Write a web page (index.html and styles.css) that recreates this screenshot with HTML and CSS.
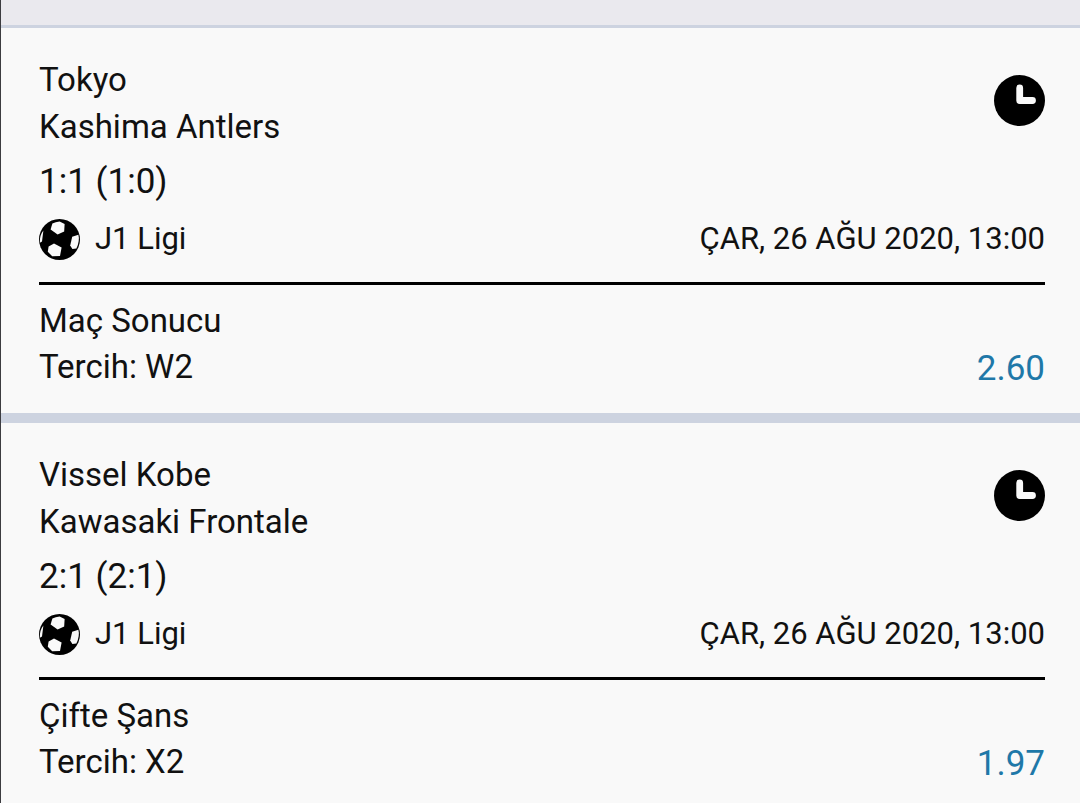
FILE: index.html
```
<!DOCTYPE html>
<html lang="tr">
<head>
    <meta charset="UTF-8">
    <meta name="viewport" content="width=device-width, initial-scale=1.0">
    <title>Kupon</title>
    <link rel="stylesheet" href="styles.css">
</head>
<body>
    <svg class="symbols" aria-hidden="true">
        <symbol id="clock" viewBox="0 0 51 51">
            <circle cx="25.5" cy="25.5" r="25.5"/>
            <path d="M25.7 13V25.5H38.5" fill="none" stroke="#f9f9f9" stroke-width="6.8" stroke-linecap="round" stroke-linejoin="round"/>
        </symbol>
        <symbol id="ball" viewBox="0 0 41 41">
            <circle cx="20.5" cy="20.5" r="20.5"/>
            <g fill="#f9f9f9">
                <path d="M13.4 4.6Q16.5 2.6 20.6 2.4L25.6 5L25.2 12.4L18.6 15.4L11.6 10.6Z"/>
                <path d="M33.2 17.8L39.4 15.8Q41 22 37.4 29.6L33.4 30L31.2 26.6Z"/>
                <path d="M15 24.6L22.6 28.6L21 37L13.2 37.2L8.8 32.8L9.6 27.4Z"/>
                <path d="M4.4 11.4Q0.2 16.5 0.9 23.8L3 22.4Z"/>
            </g>
        </symbol>
    </svg>

    <header class="topbar"></header>

    <main class="coupon">
        <article class="match">
            <div class="match-head">
                <div class="teams">
                    <div>Tokyo</div>
                    <div>Kashima Antlers</div>
                </div>
                <svg class="clock" role="img" aria-label="Beklemede"><use href="#clock"/></svg>
            </div>
            <div class="score">1:1 (1:0)</div>
            <div class="info">
                <svg class="ball" aria-hidden="true"><use href="#ball"/></svg>
                <span class="league">J1 Ligi</span>
                <time class="date" datetime="2020-08-26T13:00">ÇAR, 26 AĞU 2020, 13:00</time>
            </div>
            <div class="bet">
                <div>
                    <div>Maç Sonucu</div>
                    <div>Tercih: W2</div>
                </div>
                <div class="odds">2.60</div>
            </div>
        </article>

        <article class="match">
            <div class="match-head">
                <div class="teams">
                    <div>Vissel Kobe</div>
                    <div>Kawasaki Frontale</div>
                </div>
                <svg class="clock" role="img" aria-label="Beklemede"><use href="#clock"/></svg>
            </div>
            <div class="score">2:1 (2:1)</div>
            <div class="info">
                <svg class="ball" aria-hidden="true"><use href="#ball"/></svg>
                <span class="league">J1 Ligi</span>
                <time class="date" datetime="2020-08-26T13:00">ÇAR, 26 AĞU 2020, 13:00</time>
            </div>
            <div class="bet">
                <div>
                    <div>Çifte Şans</div>
                    <div>Tercih: X2</div>
                </div>
                <div class="odds">1.97</div>
            </div>
        </article>
    </main>
</body>
</html>
```
FILE: styles.css
```
* {
    box-sizing: border-box;
}
body {
    margin: 0;
    min-height: 100vh;
    border-left: 1px solid #3c3c40;
    background-color: #f9f9f9;
    color: #111;
    font-family: Roboto, sans-serif;
    font-size: 33px;
}
.symbols {
    display: none;
}
.topbar {
    height: 28px;
    background-color: #eae9ee;
    border-bottom: 3px solid #cdd3e0;
}
.match {
    padding: 28px 35px 23px 38px;
}
.match + .match {
    border-top: 10px solid #cdd3e0;
    padding-bottom: 0;
}
.match-head {
    display: flex;
    justify-content: space-between;
    align-items: flex-start;
}
.teams {
    line-height: 47px;
}
.clock {
    width: 51px;
    height: 51px;
    margin-top: 19px;
}
.score {
    font-size: 35px;
    line-height: 64px;
}
.info {
    display: flex;
    align-items: center;
    padding-bottom: 18px;
    border-bottom: 3px solid #000;
    font-size: 31px;
    line-height: 50px;
}
.ball {
    width: 41px;
    height: 41px;
}
.league {
    margin-left: 15px;
}
.date {
    margin-left: auto;
}
.bet {
    display: flex;
    justify-content: space-between;
    align-items: flex-end;
    padding-top: 13px;
    line-height: 46px;
}
.odds {
    color: #1f78a8;
    font-size: 35px;
    line-height: 42px;
}
```
